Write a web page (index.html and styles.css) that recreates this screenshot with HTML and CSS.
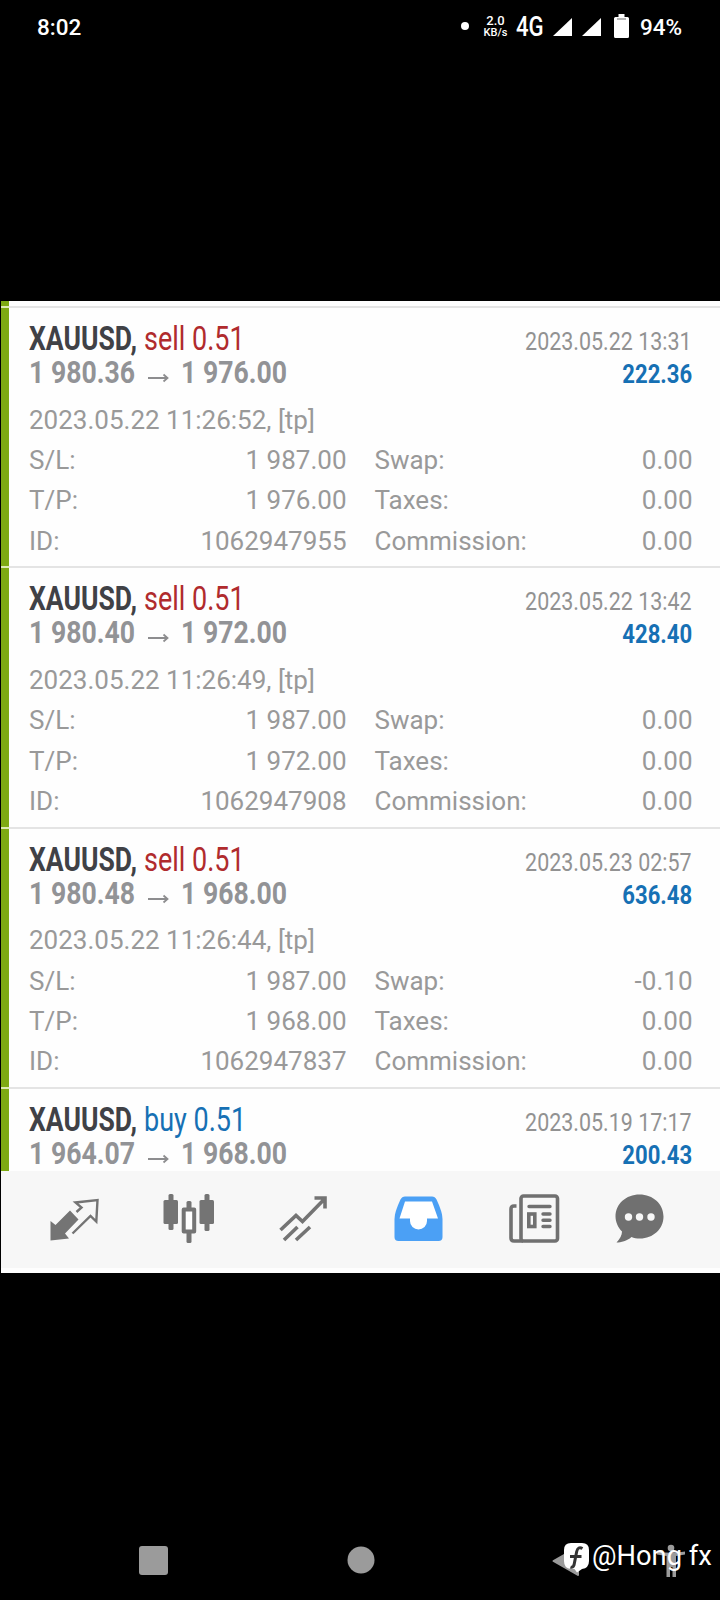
FILE: index.html
```html
<!DOCTYPE html>
<html lang="en">
<head>
<meta charset="utf-8">
<title>Trade history</title>
<link rel="stylesheet" href="styles.css">
</head>
<body>
<header class="status">
  <span class="clock">8:02</span>
  <span class="dot"></span>
  <span class="rate"><span>2.0</span><span class="unit">KB/s</span></span>
  <span class="net">4G</span>
  <svg class="signal" viewBox="0 0 19 18"><path d="M19 0V18H0Z" fill="#fff"/></svg>
  <svg class="signal second" viewBox="0 0 19 18"><path d="M19 0V18H0Z" fill="#fff"/></svg>
  <svg class="battery" viewBox="0 0 15 24"><path d="M4.500 0h6v3h3a1.500 1.500 0 0 1 1.500 1.500v18a1.500 1.500 0 0 1-1.500 1.500h-12a1.500 1.500 0 0 1-1.500-1.500v-18a1.500 1.500 0 0 1 1.500-1.500h3z" fill="#fff"/><path d="M3 4h9v2h-9z" fill="#b5b5b5"/></svg>
  <span class="percent">94%</span>
</header>
<main class="app">
  <section class="list">
    <div class="sliver"></div>
    <article class="deal">
      <div class="line"><b class="symbol">XAUUSD,</b><span class="side sell">sell 0.51</span><span class="closed">2023.05.22 13:31</span></div>
      <div class="line"><b class="price from">1 980.36</b><svg class="arrow" viewBox="0 0 21 10"><path d="M0 5H19.500M15.500 1.500L19.500 5L15.500 8.500"/></svg><b class="price">1 976.00</b><b class="profit">222.36</b></div>
      <div class="details">
        <span class="opened">2023.05.22 11:26:52, [tp]</span>
        <span>S/L:</span><span class="val">1 987.00</span><span class="lab">Swap:</span><span class="val">0.00</span>
        <span>T/P:</span><span class="val">1 976.00</span><span class="lab">Taxes:</span><span class="val">0.00</span>
        <span>ID:</span><span class="val">1062947955</span><span class="lab">Commission:</span><span class="val">0.00</span>
      </div>
    </article>
    <article class="deal">
      <div class="line"><b class="symbol">XAUUSD,</b><span class="side sell">sell 0.51</span><span class="closed">2023.05.22 13:42</span></div>
      <div class="line"><b class="price from">1 980.40</b><svg class="arrow" viewBox="0 0 21 10"><path d="M0 5H19.500M15.500 1.500L19.500 5L15.500 8.500"/></svg><b class="price">1 972.00</b><b class="profit">428.40</b></div>
      <div class="details">
        <span class="opened">2023.05.22 11:26:49, [tp]</span>
        <span>S/L:</span><span class="val">1 987.00</span><span class="lab">Swap:</span><span class="val">0.00</span>
        <span>T/P:</span><span class="val">1 972.00</span><span class="lab">Taxes:</span><span class="val">0.00</span>
        <span>ID:</span><span class="val">1062947908</span><span class="lab">Commission:</span><span class="val">0.00</span>
      </div>
    </article>
    <article class="deal">
      <div class="line"><b class="symbol">XAUUSD,</b><span class="side sell">sell 0.51</span><span class="closed">2023.05.23 02:57</span></div>
      <div class="line"><b class="price from">1 980.48</b><svg class="arrow" viewBox="0 0 21 10"><path d="M0 5H19.500M15.500 1.500L19.500 5L15.500 8.500"/></svg><b class="price">1 968.00</b><b class="profit">636.48</b></div>
      <div class="details">
        <span class="opened">2023.05.22 11:26:44, [tp]</span>
        <span>S/L:</span><span class="val">1 987.00</span><span class="lab">Swap:</span><span class="val">-0.10</span>
        <span>T/P:</span><span class="val">1 968.00</span><span class="lab">Taxes:</span><span class="val">0.00</span>
        <span>ID:</span><span class="val">1062947837</span><span class="lab">Commission:</span><span class="val">0.00</span>
      </div>
    </article>
    <article class="deal last">
      <div class="line"><b class="symbol">XAUUSD,</b><span class="side buy">buy 0.51</span><span class="closed">2023.05.19 17:17</span></div>
      <div class="line"><b class="price from">1 964.07</b><svg class="arrow" viewBox="0 0 21 10"><path d="M0 5H19.500M15.500 1.500L19.500 5L15.500 8.500"/></svg><b class="price">1 968.00</b><b class="profit">200.43</b></div>
    </article>
  </section>
  <nav class="tabs">
    <svg viewBox="0 0 50 50"><path d="M.5 27L5.500 31L20 16.500L28.500 25.500L15 39.500L19 44.500L.5 46.500Z" fill="#747474"/><path d="M26.500 18L31.500 13.500L25.500 8.500L47.500 6L46.300 27.500L40.500 22L22.500 39.500" fill="none" stroke="#747474" stroke-width="2.400"/></svg>
    <svg viewBox="0 0 52 50"><g fill="#747474"><rect x="5.500" y="0" width="5" height="36" rx="1.500"/><rect x="0.500" y="6" width="14.500" height="24" rx="1.500"/><rect x="41.500" y="0" width="5" height="37" rx="1.500"/><rect x="36.500" y="6" width="14.500" height="24" rx="1.500"/><rect x="23.500" y="7" width="5" height="8" rx="1.500"/><rect x="23.500" y="37" width="5" height="12" rx="1.500"/></g><rect x="20.700" y="15.500" width="10.500" height="22" fill="#fff" stroke="#747474" stroke-width="4" stroke-linejoin="round"/></svg>
    <svg viewBox="0 0 50 50"><path d="M1.500 36L17 21.500L23.500 27.500L45 5.500M35.500 4H46V14.500M5 46L18.500 33M17 46L31 33" fill="none" stroke="#747474" stroke-width="3.600"/></svg>
    <svg viewBox="0 0 50 50"><path fill="#4ba0f5" fill-rule="evenodd" d="M11 2.500H38Q41 2.500 42.500 5.500Q48.500 18 48.500 25V43Q48.500 47 44.500 47H4.500Q.500 47 .500 43V25Q.500 18 6.500 5.500Q8 2.500 11 2.500Z"/><path fill="#fff" d="M11 7.500H38L44 24.500H33V27A8.500 8.500 0 0 1 16 27V24.500H5.500Z"/></svg>
    <svg viewBox="0 0 52 50"><g fill="none" stroke="#707070" stroke-width="3.600"><rect x="12" y="2" width="36.500" height="45" rx="2.500"/><path d="M7.500 12H5Q2 12 2 15V44Q2 47 5 47H14"/><rect x="19.800" y="20" width="6" height="12.500"/></g><path d="M20 12.500H41M34 20H41M34 26.300H41M34 32.500H41" stroke="#707070" stroke-width="3.400" stroke-linecap="round"/></svg>
    <svg viewBox="0 0 50 50"><path fill="#707070" d="M24.500 .500C38 .500 48.500 10 48.500 22.500S38 44.500 25 44.500C21.500 44.500 19 44 16.500 43C12 47 6 48.500 1.500 48.500C5 45 7 41 7 37.500C3 33.500 .500 28 .500 22.500C.500 10 11 .500 24.500 .500Z"/><g fill="#f7f7f7"><circle cx="13.500" cy="23" r="3.700"/><circle cx="24.500" cy="23" r="3.700"/><circle cx="36" cy="23" r="3.700"/></g></svg>
  </nav>
</main>
<footer class="system">
  <svg class="recent" viewBox="0 0 29 29"><rect width="29" height="29" rx="3" fill="#9b9b9b"/></svg>
  <svg class="home" viewBox="0 0 28 28"><circle cx="14" cy="14" r="13.500" fill="#9b9b9b"/></svg>
  <svg class="back" viewBox="0 0 28 32"><path d="M1.500 16L26 2V30Z" fill="#9b9b9b" stroke="#9b9b9b" stroke-width="2" stroke-linejoin="round"/></svg>
  <svg class="access" viewBox="0 0 28 34"><g fill="#9b9b9b"><circle cx="14" cy="4" r="3.300"/><path d="M0 7.500Q14 10 28 7.500V10.500L19 12V33H15.500V23H13V33H9.500V12L0 10.500Z"/></g></svg>
  <div class="mark">
    <svg viewBox="0 0 25 30"><path d="M7 0H18Q25 0 25 7V18Q25 25 18 26L13 29.500L10.500 26H7Q0 25.500 0 18V7Q0 0 7 0Z" fill="#fff"/><path d="M18.500 5.500Q14 3 12.700 8.500L10 22Q9 25 6.500 24M6 13.500H17.500" fill="none" stroke="#333" stroke-width="3"/></svg>
    <span>@Hong fx</span>
  </div>
</footer>
</body>
</html>
```
FILE: styles.css
```css
* { box-sizing: border-box; }
body { margin: 0; width: 720px; height: 1600px; background: #000; overflow: hidden; font-family: Roboto, sans-serif; display: flex; flex-direction: column; }
svg { display: block; flex: none; }

.status { height: 301px; padding: 12px 0 0 37px; display: flex; align-items: flex-start; color: #fff; font-weight: 500; line-height: 30px; white-space: nowrap; }
.clock { width: 424px; font-size: 22.500px; }
.dot { width: 8px; height: 8px; margin: 10px 15px 0 0; border-radius: 50%; background: #fff; }
.rate { width: 33px; display: flex; flex-direction: column; align-items: center; margin: 0 4px 0 -5px; padding-top: 3px; font-size: 13px; line-height: 11.500px; }
.unit { font-size: 11px; line-height: 12px; }
.net { width: 37px; font-size: 28px; transform: scaleX(.79); transform-origin: left; }
.signal { width: 19px; height: 18px; margin-top: 6px; }
.second { margin-left: 10px; }
.battery { width: 15px; height: 24px; margin: 2px 11px 0 13px; }
.percent { font-size: 22.500px; }

.app { height: 972px; margin-left: 1px; background: #fefefe; flex: none; }
.list { height: 869.500px; overflow: hidden; }
.sliver { height: 5px; border-left: 8px solid #7eaa12; }
.deal { height: 260.300px; padding: 16.200px 28px 0 20px; border-left: 8px solid #7eaa12; position: relative; }
.deal::before { content: ""; position: absolute; left: -8px; right: 0; top: 0; height: 2px; background: linear-gradient(90deg, #dcebb0 8px, #e4e4e4 8px); }
.line { height: 34px; display: flex; align-items: baseline; line-height: 34px; white-space: nowrap; }
.symbol, .side { font-size: 32.500px; transform-origin: left; }
.symbol { width: 115px; transform: scaleX(.817); color: #404146; }
.side { width: 110px; transform: scaleX(.83); }
.sell { color: #b02b2d; }
.buy { color: #1670b4; }
.closed { margin-left: auto; font-size: 26.500px; color: #929292; transform: scaleX(.81); transform-origin: right; }
.price { width: 108px; font-size: 31.500px; color: #929396; transform: scaleX(.845); transform-origin: left; }
.from { width: 119px; }
.arrow { width: 21px; height: 10px; margin-right: 12px; fill: none; stroke: #8d8d8f; stroke-width: 1.800; }
.profit { margin-left: auto; font-size: 26px; color: #1670b4; transform: scaleX(.85); transform-origin: right; }
.details { margin-top: 9.500px; display: grid; grid-template-columns: 100px 217.500px 110.500px 235.500px; grid-auto-rows: 40.300px; font-size: 26px; line-height: 40px; color: #999; white-space: nowrap; }
.opened { grid-column: 1 / -1; }
.val { text-align: right; }
.lab { padding-left: 28px; }

.tabs { height: 97.500px; background: #f7f7f7; padding: 23.500px 0 0 49px; display: grid; grid-template-columns: 113px 116px 115px 115px 106px 50px; }
.tabs svg { height: 50px; }

.system { position: relative; flex: 1; padding: 273px 0 0 139px; display: flex; align-items: flex-start; }
.recent { width: 29px; height: 29px; }
.home { width: 28px; height: 28px; margin-left: 178.500px; }
.back { width: 28px; height: 32px; margin: -1px 0 0 177px; }
.access { width: 28px; height: 34px; margin: -2px 0 0 77px; }
.mark { position: absolute; left: 564px; top: 265px; display: flex; align-items: center; gap: 3px; color: #fff; font-size: 28px; line-height: 34px; white-space: nowrap; }
.mark svg { width: 25px; height: 30px; margin-top: 5px; }
.mark span { transform: scaleX(.975); transform-origin: left; }
```
